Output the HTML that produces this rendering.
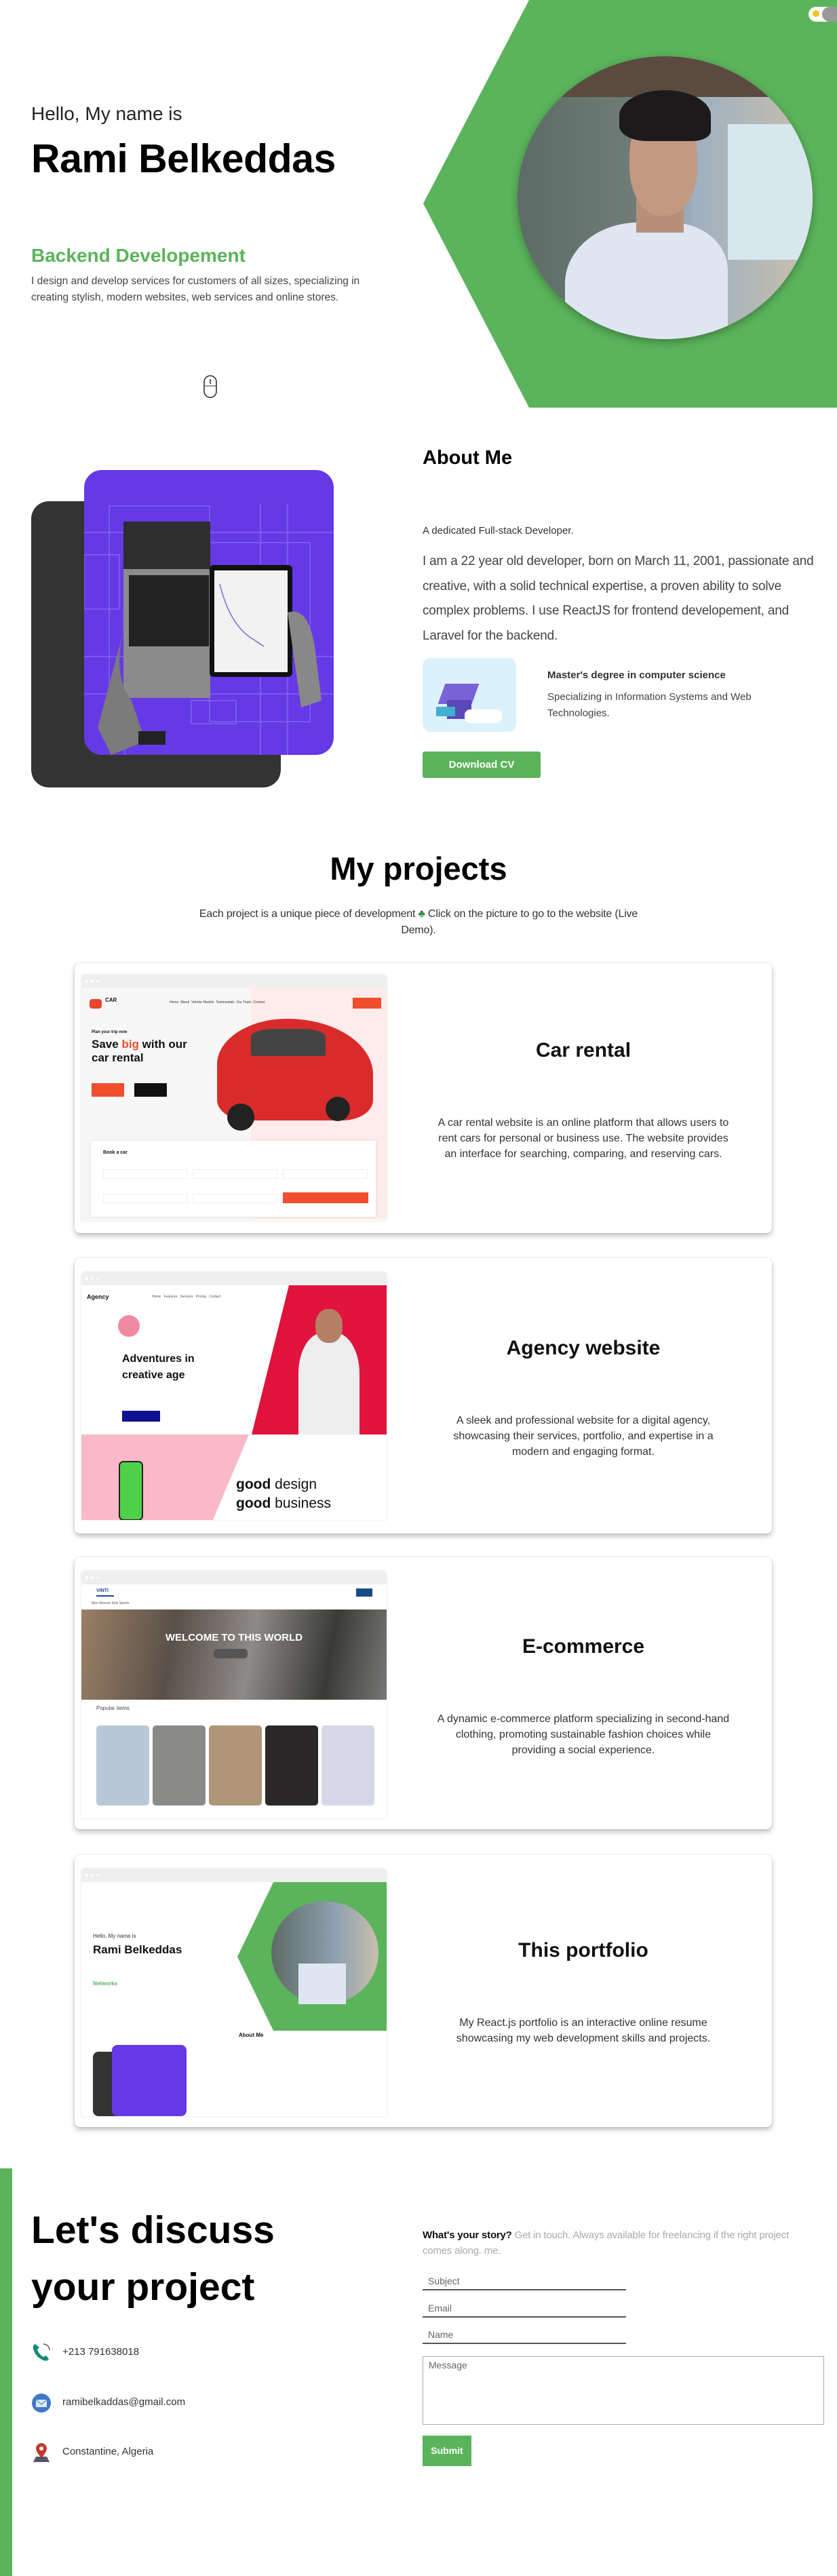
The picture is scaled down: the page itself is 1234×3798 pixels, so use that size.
<!DOCTYPE html>
<html><head><meta charset="utf-8"><style>
*{margin:0;padding:0;box-sizing:border-box}
body{width:1234px;height:3798px;position:relative;background:#fff;font-family:"Liberation Sans",sans-serif;color:#111;overflow:hidden}
.a{position:absolute}
.g{color:#5bb35b}
.card{position:absolute;left:110px;width:1028px;background:#fff;border-radius:8px;box-shadow:0 4px 8px rgba(0,0,0,.25),0 0 2px rgba(0,0,0,.12)}
.shot{position:absolute;left:10px;top:20px;width:450px;border-radius:6px 6px 0 0;overflow:hidden;background:#fff;box-shadow:0 0 3px rgba(0,0,0,.12)}
.bar{height:20px;background:#efefef;position:relative}
.bar i{position:absolute;top:8px;width:4px;height:4px;border-radius:50%;background:#fff}
.ct{position:absolute;left:530px;width:440px;text-align:center}
.ct h3{font-size:30px;font-weight:700;color:#111}
.ct p{font-size:16px;line-height:23px;color:#333}
.inp{position:absolute;left:623px;width:300px;border-bottom:2px solid #555;font-size:14px;color:#666;padding-left:8px;height:22px}
</style></head><body>

<!-- HERO -->
<svg class="a" style="left:0;top:0" width="1234" height="602"><polygon points="780,0 1234,0 1234,601 780,601 624,300" fill="#5bb35b"/></svg>
<div class="a" style="left:1192px;top:10px;width:44px;height:22px;border-radius:11px;background:#fff"></div>
<div class="a" style="left:1198px;top:15px;width:10px;height:10px;border-radius:50%;background:#f5c518"></div>
<div class="a" style="left:1212px;top:10px;width:22px;height:22px;border-radius:11px 0 0 11px;background:#999"></div>

<div class="a" style="left:763px;top:83px;width:435px;height:417px;border-radius:50%;overflow:hidden;background:linear-gradient(90deg,#5d6b66 0%,#6f7c78 40%,#9fb0c0 60%,#c9bfae 100%);box-shadow:0 4px 12px rgba(0,0,0,.3)">
 <div class="a" style="left:0;top:0;width:435px;height:60px;background:#5a4a40"></div>
 <div class="a" style="left:310px;top:100px;width:125px;height:200px;background:#d8e6ee"></div>
 <div class="a" style="left:70px;top:245px;width:240px;height:200px;background:#dfe6f2;border-radius:45% 35% 0 0"></div>
 <div class="a" style="left:175px;top:200px;width:70px;height:60px;background:#b8907a"></div>
 <div class="a" style="left:165px;top:75px;width:100px;height:160px;background:#c29a82;border-radius:45%"></div>
 <div class="a" style="left:150px;top:50px;width:135px;height:75px;background:#1c1a1a;border-radius:50% 50% 20% 30%"></div>
</div>

<div class="a" style="left:46px;top:152px;font-size:28px;font-weight:300;color:#222">Hello, My name is</div>
<div class="a" style="left:46px;top:200px;font-size:59px;font-weight:700;color:#000;letter-spacing:-0.5px">Rami Belkeddas</div>
<div class="a g" style="left:46px;top:361px;font-size:28px;font-weight:700">Backend Developement</div>
<div class="a" style="left:46px;top:403px;font-size:15.5px;line-height:24px;color:#444;width:515px">I design and develop services for customers of all sizes, specializing in creating stylish, modern websites, web services and online stores.</div>
<svg class="a" style="left:299px;top:552px" width="22" height="36"><rect x="2" y="2" width="18" height="32" rx="9" fill="none" stroke="#333" stroke-width="1.6"/><line x1="11" y1="7" x2="11" y2="14" stroke="#333" stroke-width="1.6"/><line x1="2" y1="17" x2="20" y2="17" stroke="#333" stroke-width="1"/></svg>

<!-- ABOUT -->
<div class="a" style="left:46px;top:739px;width:368px;height:422px;background:#333;border-radius:26px"></div>
<div class="a" style="left:124px;top:693px;width:368px;height:420px;background:#6639e6;border-radius:26px;overflow:hidden">
 <svg width="368" height="420" class="a" style="left:0;top:0">
  <g stroke="#8a6cf0" stroke-width="1.2" fill="none">
   <rect x="37" y="53" width="148" height="268"/><rect x="185" y="107" width="148" height="264"/>
   <rect x="0" y="125" width="52" height="80"/><rect x="158" y="340" width="66" height="34"/>
   <line x1="0" y1="92" x2="368" y2="92"/><line x1="0" y1="275" x2="368" y2="275"/><line x1="0" y1="330" x2="368" y2="330"/>
   <line x1="260" y1="50" x2="260" y2="420"/><line x1="300" y1="50" x2="300" y2="420"/><line x1="60" y1="340" x2="60" y2="420"/>
  </g>
  <rect x="58" y="76" width="128" height="260" fill="#8b8b8b"/>
  <rect x="58" y="76" width="128" height="70" fill="#2e2e2e"/>
  <rect x="66" y="155" width="118" height="105" fill="#222"/>
  <rect x="185" y="140" width="122" height="165" fill="#111" rx="6"/>
  <rect x="192" y="148" width="108" height="150" fill="#f2f2f2"/>
  <path d="M200 168 Q215 230 250 250 L265 260" stroke="#7a6ad8" stroke-width="1.5" fill="none"/>
  <path d="M60 230 Q40 300 70 340 L90 400 L40 420 L20 380 Z" fill="#7b7b7b"/>
  <path d="M300 210 Q330 200 340 260 L350 340 L320 350 Z" fill="#888"/>
  <rect x="80" y="385" width="40" height="20" fill="#222"/>
 </svg>
</div>
<div class="a" style="left:623px;top:659px;font-size:29px;font-weight:700;color:#000">About Me</div>
<div class="a" style="left:623px;top:774px;font-size:15px;color:#333">A dedicated Full-stack Developer.</div>
<div class="a" style="left:623px;top:810px;width:600px;font-size:19px;line-height:36.5px;color:#444;letter-spacing:-0.2px">I am a 22 year old developer, born on March 11, 2001, passionate and creative, with a solid technical expertise, a proven ability to solve complex problems. I use ReactJS for frontend developement, and Laravel for the backend.</div>
<div class="a" style="left:623px;top:970px;width:138px;height:109px;background:#dcf2fb;border-radius:12px;overflow:hidden">
 <div class="a" style="left:28px;top:38px;width:50px;height:30px;background:#7a63d8;transform:skewX(-20deg)"></div>
 <div class="a" style="left:36px;top:62px;width:36px;height:28px;background:#5a48b8"></div>
 <div class="a" style="left:62px;top:76px;width:55px;height:20px;background:#fff;border-radius:8px"></div>
 <div class="a" style="left:20px;top:72px;width:28px;height:14px;background:#3fb0d0"></div>
</div>
<div class="a" style="left:807px;top:987px;font-size:15px;font-weight:700;color:#333">Master's degree in computer science</div>
<div class="a" style="left:807px;top:1016px;width:340px;font-size:15px;line-height:24px;color:#444">Specializing in Information Systems and Web Technologies.</div>
<div class="a" style="left:623px;top:1108px;width:174px;height:39px;background:#5bb35b;border-radius:3px;color:#fff;font-size:15px;font-weight:700;text-align:center;line-height:39px">Download CV</div>

<!-- PROJECTS -->
<div class="a" style="left:0;top:1253px;width:1234px;text-align:center;font-size:47px;font-weight:700;color:#000">My projects</div>
<div class="a" style="left:287px;top:1336px;width:660px;text-align:center;font-size:16px;line-height:24px;color:#333;letter-spacing:-0.2px">Each project is a unique piece of development <span style="color:#2a8a3a">&#9827;</span> Click on the picture to go to the website (Live Demo).</div>

<!-- card1 -->
<div class="card" style="top:1420px;height:398px">
 <div class="shot" style="top:17px;height:363px;background:#f7f7f7">
  <div class="bar"><i style="left:6px"></i><i style="left:14px"></i><i style="left:22px"></i></div>
  <div class="a" style="left:250px;top:20px;width:200px;height:340px;background:#fdeceb"></div>
  <div class="a" style="left:12px;top:36px;width:18px;height:14px;background:#e8452c;border-radius:4px"></div>
  <div class="a" style="left:35px;top:33px;font-size:8px;font-weight:700">CAR</div>
  <div class="a" style="left:130px;top:38px;font-size:5px;color:#333">Home &nbsp;About &nbsp;Vehicle Models &nbsp;Testimonials &nbsp;Our Team &nbsp;Contact</div>
  <div class="a" style="left:400px;top:34px;width:42px;height:16px;background:#f04e2e"></div>
  <div class="a" style="left:15px;top:82px;font-size:6px;font-weight:700">Plan your trip now</div>
  <div class="a" style="left:15px;top:93px;font-size:17px;font-weight:700;line-height:20px">Save <span style="color:#f04e2e">big</span> with our<br>car rental</div>
  <div class="a" style="left:15px;top:160px;width:48px;height:20px;background:#f04e2e"></div>
  <div class="a" style="left:78px;top:160px;width:48px;height:20px;background:#111"></div>
  <div class="a" style="left:200px;top:65px;width:230px;height:150px;background:#d92b2b;border-radius:45% 55% 20% 20%"></div>
  <div class="a" style="left:250px;top:80px;width:110px;height:40px;background:#444;border-radius:30% 30% 5% 5%"></div>
  <div class="a" style="left:215px;top:190px;width:40px;height:40px;background:#222;border-radius:50%"></div>
  <div class="a" style="left:360px;top:180px;width:36px;height:36px;background:#222;border-radius:50%"></div>
  <div class="a" style="left:14px;top:245px;width:420px;height:112px;background:#fff;box-shadow:0 0 4px rgba(0,0,0,.1)">
   <div class="a" style="left:18px;top:14px;font-size:7px;font-weight:700">Book a car</div>
   <div class="a" style="left:18px;top:42px;width:125px;height:14px;border:1px solid #eee"></div>
   <div class="a" style="left:150px;top:42px;width:125px;height:14px;border:1px solid #eee"></div>
   <div class="a" style="left:283px;top:42px;width:125px;height:14px;border:1px solid #eee"></div>
   <div class="a" style="left:18px;top:78px;width:125px;height:14px;border:1px solid #eee"></div>
   <div class="a" style="left:150px;top:78px;width:125px;height:14px;border:1px solid #eee"></div>
   <div class="a" style="left:283px;top:76px;width:126px;height:16px;background:#f04e2e"></div>
  </div>
 </div>
 <div class="ct" style="top:112px"><h3>Car rental</h3></div>
 <div class="ct" style="top:224px"><p>A car rental website is an online platform that allows users to rent cars for personal or business use. The website provides an interface for searching, comparing, and reserving cars.</p></div>
</div>

<!-- card2 -->
<div class="card" style="top:1855px;height:406px">
 <div class="shot" style="top:20px;height:366px">
  <div class="bar"><i style="left:6px"></i><i style="left:14px"></i><i style="left:22px"></i></div>
  <svg class="a" style="left:0;top:20px" width="450" height="346"><polygon points="306,0 450,0 450,220 251,220" fill="#e0143c"/><polygon points="0,220 247,220 194,346 0,346" fill="#f9b9c9"/><rect x="56" y="260" width="34" height="86" rx="6" fill="#4fd04a" stroke="#222" stroke-width="2"/><circle cx="70" cy="60" r="16" fill="#f08aa0"/></svg>
  <div class="a" style="left:320px;top:90px;width:90px;height:150px;background:#eee;border-radius:40% 40% 0 0"></div>
  <div class="a" style="left:345px;top:55px;width:40px;height:50px;background:#b58066;border-radius:45%"></div>
  <div class="a" style="left:8px;top:32px;font-size:9px;font-weight:700">Agency</div>
  <div class="a" style="left:104px;top:34px;font-size:5px;color:#555">Home &nbsp; Features &nbsp; Services &nbsp; Pricing &nbsp; Contact</div>
  <div class="a" style="left:60px;top:117px;font-size:16px;font-weight:700;line-height:24px">Adventures in<br>creative age</div>
  <div class="a" style="left:60px;top:205px;width:56px;height:16px;background:#101090"></div>
  <div class="a" style="left:228px;top:300px;font-size:21px;line-height:28px;color:#111"><b>good</b> design<br><b>good</b> business</div>
 </div>
 <div class="ct" style="top:116px"><h3>Agency website</h3></div>
 <div class="ct" style="top:228px"><p>A sleek and professional website for a digital agency, showcasing their services, portfolio, and expertise in a modern and engaging format.</p></div>
</div>

<!-- card3 -->
<div class="card" style="top:2296px;height:401px">
 <div class="shot" style="top:20px;height:365px">
  <div class="bar"><i style="left:6px"></i><i style="left:14px"></i><i style="left:22px"></i></div>
  <div class="a" style="left:22px;top:26px;width:26px;height:12px;border-bottom:2px solid #1a4a8a;font-size:7px;font-weight:700;color:#1a4a8a">VINTI</div>
  <div class="a" style="left:405px;top:26px;width:24px;height:12px;background:#1a4a8a"></div>
  <div class="a" style="left:15px;top:45px;font-size:5px;color:#555">Men Women Kids Sports</div>
  <div class="a" style="left:0;top:57px;width:450px;height:133px;background:linear-gradient(100deg,#9a8066 0%,#5a5048 30%,#8d8a88 55%,#3a3a36 80%,#777 100%)"></div>
  <div class="a" style="left:0;top:90px;width:450px;text-align:center;font-size:15px;font-weight:700;color:#fff">WELCOME TO THIS WORLD</div>
  <div class="a" style="left:195px;top:115px;width:50px;height:14px;background:#555;border-radius:5px"></div>
  <div class="a" style="left:22px;top:198px;font-size:8px;color:#444">Popular items</div>
  <div class="a" style="left:22px;top:228px;width:78px;height:118px;background:#b9c8d8;border-radius:5px"></div>
  <div class="a" style="left:105px;top:228px;width:78px;height:118px;background:#8a8a88;border-radius:5px"></div>
  <div class="a" style="left:188px;top:228px;width:78px;height:118px;background:#b09578;border-radius:5px"></div>
  <div class="a" style="left:271px;top:228px;width:78px;height:118px;background:#2a2828;border-radius:5px"></div>
  <div class="a" style="left:354px;top:228px;width:78px;height:118px;background:#d7d7ea;border-radius:5px"></div>
 </div>
 <div class="ct" style="top:115px"><h3>E-commerce</h3></div>
 <div class="ct" style="top:227px"><p>A dynamic e-commerce platform specializing in second-hand clothing, promoting sustainable fashion choices while providing a social experience.</p></div>
</div>

<!-- card4 -->
<div class="card" style="top:2735px;height:401px">
 <div class="shot" style="top:20px;height:365px">
  <div class="bar"><i style="left:6px"></i><i style="left:14px"></i><i style="left:22px"></i></div>
  <svg class="a" style="left:0;top:20px" width="450" height="345"><polygon points="283,0 450,0 450,219 283,219 230,110" fill="#5bb35b"/><rect x="17" y="250" width="100" height="95" rx="8" fill="#333"/><rect x="45" y="240" width="110" height="105" rx="8" fill="#6639e6"/></svg>
  <div class="a" style="left:280px;top:48px;width:158px;height:152px;border-radius:50%;background:linear-gradient(90deg,#5d6b66,#8fa0b0 60%,#c9bfae)"></div>
  <div class="a" style="left:320px;top:140px;width:70px;height:60px;background:#dfe6f2"></div>
  <div class="a" style="left:17px;top:95px;font-size:8px;color:#333">Hello, My name is</div>
  <div class="a" style="left:17px;top:110px;font-size:17px;font-weight:700">Rami Belkeddas</div>
  <div class="a g" style="left:17px;top:165px;font-size:8px;font-weight:700">Networks</div>
  <div class="a" style="left:232px;top:241px;font-size:8px;font-weight:700">About Me</div>
 </div>
 <div class="ct" style="top:124px"><h3>This portfolio</h3></div>
 <div class="ct" style="top:236px"><p>My React.js portfolio is an interactive online resume showcasing my web development skills and projects.</p></div>
</div>

<!-- CONTACT -->
<div class="a" style="left:0;top:3197px;width:18px;height:601px;background:#5bb35b"></div>
<div class="a" style="left:46px;top:3246px;font-size:57px;font-weight:700;line-height:84px;color:#000">Let's discuss<br>your project</div>
<svg class="a" style="left:46px;top:3453px" width="30" height="30"><path d="M6 3 Q2 4 3 10 Q6 22 18 27 Q24 29 26 25 L22 20 L18 22 Q11 18 9 11 L12 8 Z" fill="#138a7a"/><path d="M18 3 A9 9 0 0 1 27 12" stroke="#333" fill="none" stroke-width="1.2"/></svg>
<div class="a" style="left:92px;top:3459px;font-size:15px;color:#333">+213 791638018</div>
<svg class="a" style="left:46px;top:3528px" width="30" height="30"><circle cx="15" cy="15" r="14" fill="#3f79c8"/><rect x="7" y="10" width="16" height="11" fill="#dce8f8"/><path d="M7 10 L15 17 L23 10" stroke="#3f79c8" fill="none"/></svg>
<div class="a" style="left:92px;top:3533px;font-size:15px;color:#333">ramibelkaddas@gmail.com</div>
<svg class="a" style="left:46px;top:3600px" width="30" height="32"><path d="M15 2 A8 8 0 0 1 23 10 Q23 15 15 24 Q7 15 7 10 A8 8 0 0 1 15 2Z" fill="#c0392b"/><circle cx="15" cy="10" r="3" fill="#fff"/><path d="M3 30 L7 22 L23 22 L27 30Z" fill="#556"/></svg>
<div class="a" style="left:92px;top:3606px;font-size:15px;color:#333">Constantine, Algeria</div>

<div class="a" style="left:623px;top:3284px;width:555px;font-size:15px;line-height:23px;color:#aaa;letter-spacing:-0.2px"><b style="color:#111">What's your story?</b> Get in touch. Always available for freelancing if the right project comes along. me.</div>
<div class="inp" style="top:3355px">Subject</div>
<div class="inp" style="top:3395px">Email</div>
<div class="inp" style="top:3434px">Name</div>
<div class="a" style="left:623px;top:3474px;width:592px;height:101px;border:1px solid #aaa;font-size:14px;color:#666;padding:4px 8px">Message</div>
<div class="a" style="left:623px;top:3591px;width:72px;height:45px;background:#5bb35b;color:#fff;font-size:14px;font-weight:700;text-align:center;line-height:45px">Submit</div>
</body></html>
